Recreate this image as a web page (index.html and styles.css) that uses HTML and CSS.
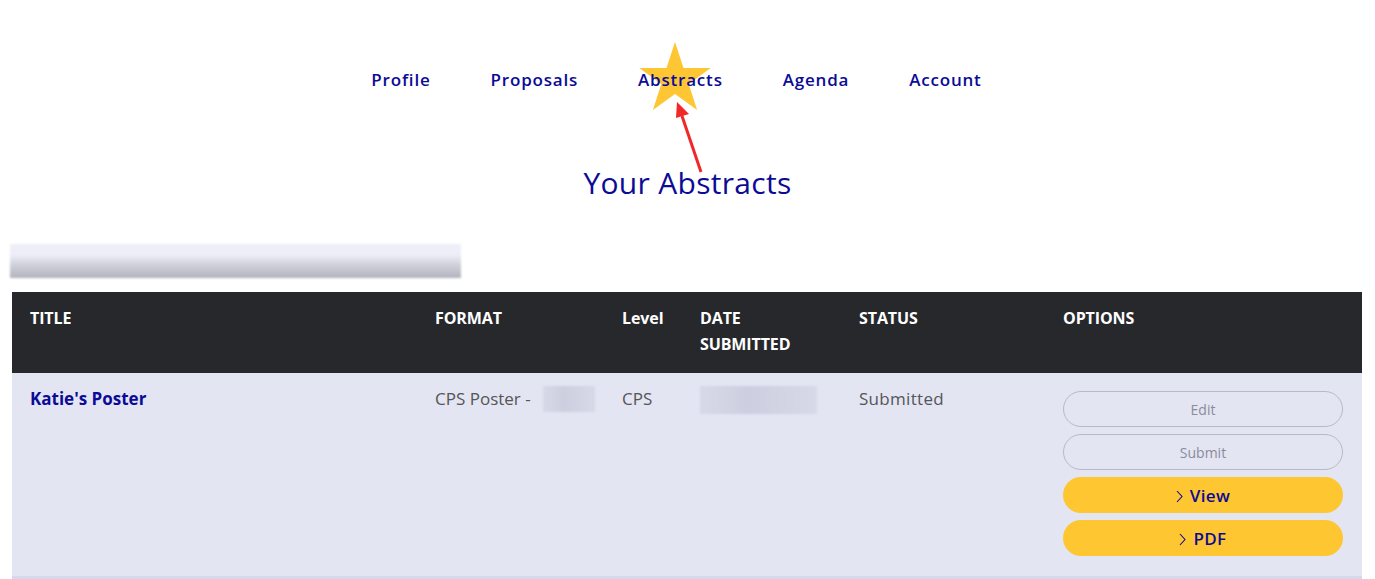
FILE: index.html
```html
<!DOCTYPE html>
<html lang="en">
<head>
<meta charset="utf-8">
<title>Your Abstracts</title>
<link rel="stylesheet" href="styles.css">
</head>
<body>
<header class="top">
  <nav class="nav">
    <a class="nav-link" href="#">Profile</a>
    <a class="nav-link" href="#">Proposals</a>
    <a class="nav-link nav-active" href="#">Abstracts</a>
    <a class="nav-link" href="#">Agenda</a>
    <a class="nav-link" href="#">Account</a>
  </nav>
  <svg class="annotation" width="120" height="140" viewBox="0 0 120 140" aria-hidden="true">
    <polygon fill="#fec632" points="60,2 68.5,27.9 95.7,28.1 73.7,44 82.1,70 60,54 37.9,70 46.3,44 24.3,28.1 51.5,27.9"/>
    <line x1="86" y1="132" x2="67" y2="76" stroke="#f02828" stroke-width="3"/>
    <polygon fill="#f02828" points="62,62 61,78 74,74"/>
  </svg>
  <h1 class="page-title">Your Abstracts</h1>
</header>
<div class="blur-bar"></div>
<table class="abstracts">
  <thead>
    <tr>
      <th class="c-title">TITLE</th>
      <th class="c-format">FORMAT</th>
      <th class="c-level">Level</th>
      <th class="c-date">DATE<br>SUBMITTED</th>
      <th class="c-status">STATUS</th>
      <th class="c-options">OPTIONS</th>
    </tr>
  </thead>
  <tbody>
    <tr>
      <td class="c-title"><a class="abs-title" href="#">Katie's Poster</a></td>
      <td class="c-format">CPS Poster - <span class="blur blur-format"></span></td>
      <td class="c-level">CPS</td>
      <td class="c-date"><span class="blur blur-date"></span></td>
      <td class="c-status">Submitted</td>
      <td class="c-options">
        <div class="options">
          <button class="btn btn-outline" type="button">Edit</button>
          <button class="btn btn-outline" type="button">Submit</button>
          <button class="btn btn-yellow" type="button"><svg class="chev" width="7" height="13" viewBox="0 0 7 13" aria-hidden="true"><path d="M1 1 L6 6.5 L1 12" fill="none" stroke="#0b0b96" stroke-width="1.1"/></svg>View</button>
          <button class="btn btn-yellow" type="button"><svg class="chev" width="7" height="13" viewBox="0 0 7 13" aria-hidden="true"><path d="M1 1 L6 6.5 L1 12" fill="none" stroke="#0b0b96" stroke-width="1.1"/></svg>PDF</button>
        </div>
      </td>
    </tr>
  </tbody>
</table>
</body>
</html>
```
FILE: styles.css
```css
* { box-sizing: border-box; }
html, body { margin: 0; padding: 0; background: #ffffff; }
body {
  font-family: "Open Sans", "Liberation Sans", sans-serif;
  color: #555;
  width: 1375px;
  overflow: hidden;
}
.top {
  position: relative;
  z-index: 0;
  padding-top: 66px;
}
.nav {
  display: flex;
  justify-content: center;
  gap: 60px;
  padding-right: 22px;
  height: 28px;
  align-items: center;
}
.nav-link {
  font-size: 17px;
  font-weight: 600;
  color: #0b0b96;
  text-decoration: none;
  letter-spacing: 0.8px;
  line-height: 28px;
  position: relative;
  z-index: 1;
}
.annotation {
  position: absolute;
  left: 615px;
  top: 40px;
  z-index: 0;
  pointer-events: none;
}
.page-title {
  margin: 0;
  padding-top: 71px;
  text-align: center;
  font-weight: 400;
  font-size: 30px;
  letter-spacing: 0.3px;
  line-height: 36px;
  color: #0b0b96;
  position: relative;
  z-index: 1;
}
.blur-bar {
  margin: 43px 0 14px 10px;
  width: 451px;
  height: 34px;
  background: linear-gradient(180deg, #eeeef9 0%, #eeeef8 32%, #d2d2dc 60%, #b3b3bf 100%);
  filter: blur(1px);
}
.abstracts {
  margin-left: 12px;
  width: 1350px;
  border-collapse: collapse;
  table-layout: fixed;
}
.abstracts th, .abstracts td {
  text-align: left;
  vertical-align: top;
  padding: 13px 18px 16px 18px;
  line-height: 26px;
}
.abstracts thead tr { background: #27282c; }
.abstracts th {
  color: #ffffff;
  font-size: 16px;
  font-weight: 700;
  letter-spacing: -0.1px;
}
.abstracts tbody tr {
  background: #e3e5f3;
  border-bottom: 3px solid #d6d8ee;
}
.abstracts td {
  font-size: 17px;
  color: #555558;
  padding-bottom: 20px;
}
.c-title { width: 405px; }
.c-format { width: 187px; }
.c-level { width: 78px; }
.c-date { width: 159px; }
.c-status { width: 204px; }
.c-options { width: 317px; }
.abstracts td.c-format { white-space: nowrap; padding-right: 4px; }
.abstracts td.c-status { letter-spacing: 0.3px; }
.abs-title {
  color: #0b0b96;
  font-weight: 700;
  text-decoration: none;
  font-size: 17px;
}
.blur {
  display: inline-block;
  vertical-align: top;
  background: linear-gradient(90deg, #d8d9e8, #cdcedf 40%, #d2d3e3 70%, #d8d9e8);
  filter: blur(1px);
}
.blur-format { width: 52px; height: 26px; margin-left: 8px; }
.blur-date { width: 117px; height: 28px; }
.abstracts td.c-options { padding-top: 18px; padding-right: 19px; }
.options {
  display: flex;
  flex-direction: column;
  gap: 7px;
}
.btn {
  width: 280px;
  height: 36px;
  border-radius: 18px;
  font-family: inherit;
  font-size: 14px;
  cursor: pointer;
  display: flex;
  align-items: center;
  justify-content: center;
}
.btn-outline {
  background: transparent;
  border: 1px solid #b9b9c3;
  color: #8b8b99;
}
.btn-yellow {
  background: #fec630;
  border: none;
  color: #0b0b96;
  font-size: 17px;
  font-weight: 600;
  letter-spacing: 0.4px;
}
.chev {
  margin-right: 7px;
  margin-top: 2px;
}
```
